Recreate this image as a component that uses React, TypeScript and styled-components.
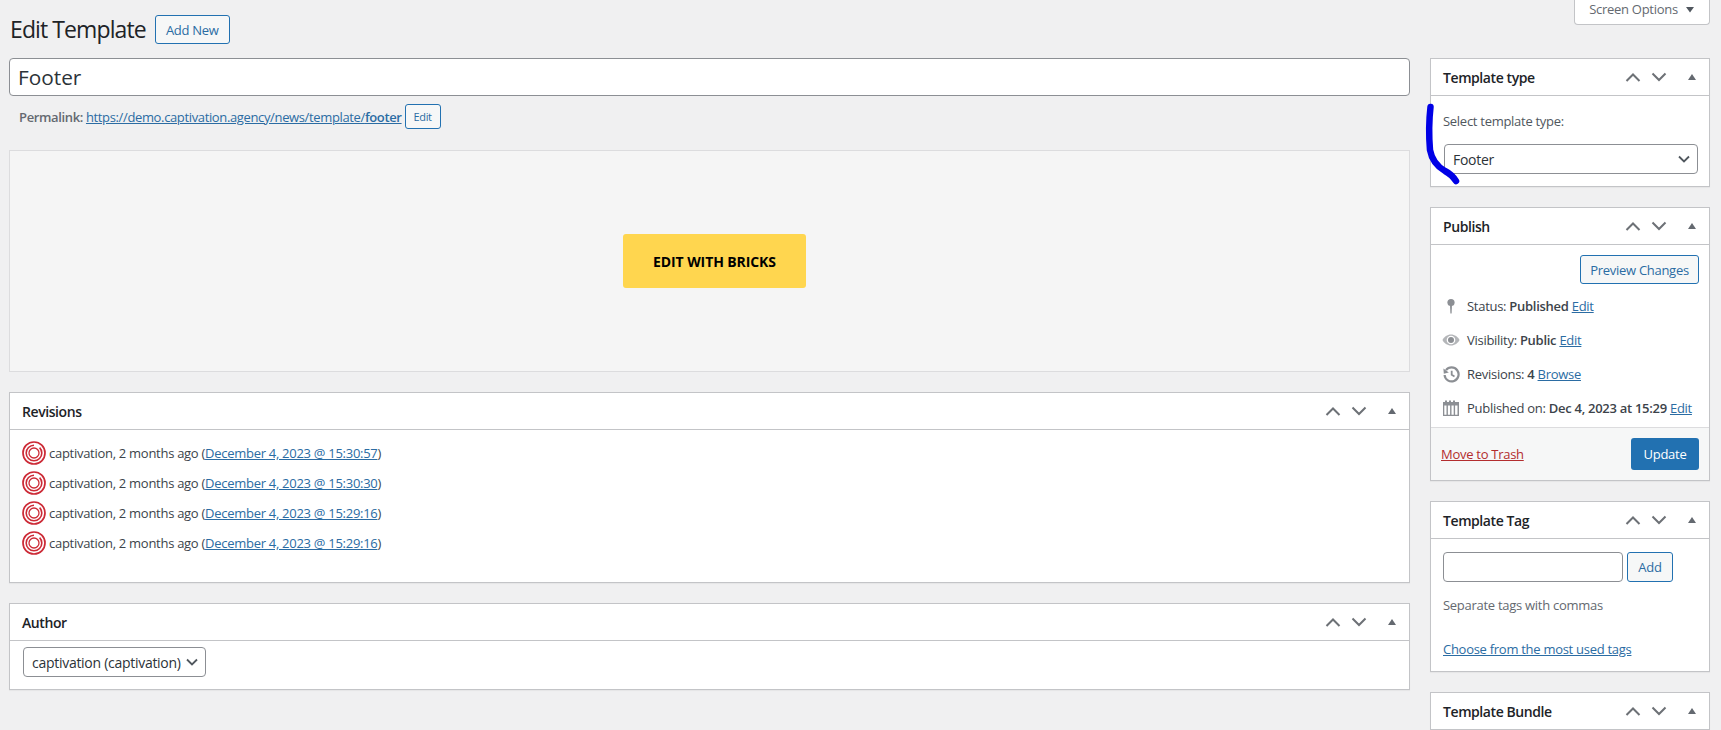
import React from "react";
import styled, { createGlobalStyle } from "styled-components";

const Global = createGlobalStyle`
  html, body { margin: 0; padding: 0; height: 730px; overflow: hidden; background: #f0f0f1; }
  body { font-family: "Open Sans", "Noto Sans", "Liberation Sans", sans-serif; font-size: 13px; color: #3c434a; letter-spacing: -0.28px; }
  * { box-sizing: border-box; }
`;
const Page = styled.div`position: relative; height: 730px; overflow: hidden; padding: 0 11px 0 9px;`;
const Header = styled.header`display: flex; align-items: center; height: 29px; margin: 15px 0 14px;`;
const Title = styled.h1`margin: 0 9px 0 1px; font-size: 23px; font-weight: 400; color: #1d2327; line-height: 29px; letter-spacing: -0.9px;`;
const OutlineButton = styled.button<{ $h?: number; $w?: number; $fs?: number }>`
  height: ${(p) => p.$h ?? 29}px; width: ${(p) => (p.$w ? p.$w + "px" : "auto")};
  padding: 0; border: 1px solid #2271b1; border-radius: 3px; background: #f6f7f7; color: #2b6ca3;
  font: inherit; font-size: ${(p) => p.$fs ?? 13}px; letter-spacing: inherit; flex: none;
`;
const ScreenOptions = styled.button`
  margin: -15px 0 0 auto; align-self: flex-start; width: 136px; height: 25px; padding: 0 0 6px; display: flex; align-items: center; justify-content: center; gap: 7px;
  border: 1px solid #c3c4c7; border-top: 0; border-radius: 0 0 4px 4px; background: #fff; color: #646970; font: inherit; letter-spacing: inherit;
`;
const Columns = styled.div`display: grid; grid-template-columns: 1401px 280px; column-gap: 20px; align-items: start;`;
const Main = styled.main`display: flex; flex-direction: column;`;
const Side = styled.aside`display: flex; flex-direction: column; gap: 20px;`;
const TitleInput = styled.input`
  width: 100%; height: 38px; padding: 0 8px; border: 1px solid #8c8f94; border-radius: 4px; background: #fff;
  font: inherit; font-size: 20.8px; color: #2c3338; outline: none; letter-spacing: 0;
`;
const PermalinkRow = styled.div`display: flex; align-items: center; gap: 3px; height: 25px; margin: 8px 0 21px; padding-left: 10px; color: #646970; font-size: 13px; letter-spacing: -0.36px;`;
const Link = styled.a<{ $danger?: boolean }>`color: ${(p) => (p.$danger ? "#b32d2e" : "#2b6ca3")}; text-decoration: underline;`;
const EditorBox = styled.section`display: flex; align-items: center; justify-content: center; height: 222px; margin-bottom: 20px; background: #f5f5f5; border: 1px solid #dcdcde; padding-left: 10px;`;
const BricksButton = styled.button`
  width: 183px; height: 54px; border: 0; border-radius: 3px; background: #ffd64f; color: #000;
  font: inherit; font-size: 14px; font-weight: 700; text-transform: uppercase; letter-spacing: -0.1px;
`;
const Panel = styled.section<{ $mb?: number }>`background: #fff; border: 1px solid #c3c4c7; margin-bottom: ${(p) => p.$mb ?? 0}px; box-shadow: 0 1px 1px rgba(0,0,0,.04);`;
const PanelHeader = styled.div`display: flex; align-items: center; height: 37px; padding: 0 12px; border-bottom: 1px solid #c3c4c7;`;
const PanelTitle = styled.h2`margin: 0; font-size: 14px; font-weight: 600; color: #1d2327; flex: 1; letter-spacing: -0.42px;`;
const Handles = styled.div`display: flex; align-items: center; gap: 10px;`;
const RevisionList = styled.ul`list-style: none; margin: 0; padding: 8px 12px 24px;`;
const RevisionRow = styled.li`display: flex; align-items: center; gap: 3px; height: 30px; white-space: pre;`;
const AuthorBody = styled.div`padding: 6px 13px 12px;`;
const Select = styled.div<{ $w?: number }>`
  display: flex; align-items: center; justify-content: space-between; height: 30px; width: ${(p) => (p.$w ? p.$w + "px" : "auto")};
  padding: 0 5px 0 8px; border: 1px solid #8c8f94; border-radius: 4px; background: #fff; color: #2c3338; font-size: 14px;
`;
const TypeBody = styled.div`padding: 16px 11px 12px 13px;`;
const FieldLabel = styled.div`line-height: 18px; margin: 0 0 14px -1px; color: #50575e;`;
const PublishActions = styled.div`display: flex; justify-content: flex-end; padding: 10px 10px 5px;`;
const MetaRow = styled.div`display: flex; align-items: center; height: 34px; padding-left: 10px;`;
const MetaIcon = styled.span`display: flex; justify-content: center; width: 20px; margin-right: 6px; color: #8c8f94;`;
const MetaText = styled.span`white-space: pre;`;
const PublishFooter = styled.div`display: flex; align-items: center; justify-content: space-between; height: 53px; margin-top: 2px; padding: 0 10px; background: #f6f7f7; border-top: 1px solid #dcdcde;`;
const PrimaryButton = styled.button`width: 68px; height: 32px; border: 0; border-radius: 3px; background: #2271b1; color: #fff; font: inherit; font-size: 13px; letter-spacing: inherit;`;
const TagBody = styled.div`padding: 13px 12px 13px;`;
const TagRow = styled.div`display: flex; gap: 4px;`;
const TagInput = styled.input`width: 180px; height: 30px; border: 1px solid #8c8f94; border-radius: 4px; background: #fff; outline: none;`;
const Hint = styled.p`margin: 14px 0 26px; line-height: 18px; color: #646970;`;
const Annotation = styled.svg`position: absolute; left: 1420px; top: 100px; pointer-events: none;`;

const Up = () => <svg width="16" height="10" viewBox="0 0 16 10"><path d="M1.500 9 8 2.500 14.500 9" fill="none" stroke="#6d7176" strokeWidth="2"/></svg>;
const Down = () => <svg width="16" height="10" viewBox="0 0 16 10"><path d="M1.500 1.500 8 8l6.500-6.500" fill="none" stroke="#6d7176" strokeWidth="2"/></svg>;
const Tri = () => <svg width="10" height="8" viewBox="0 0 10 8" style={{ marginLeft: 10 }}><path d="M5 1l4 6H1z" fill="#646970"/></svg>;
const Chevron = () => <svg width="16" height="10" viewBox="0 0 16 10"><path d="M3 2.500l5 5 5-5" fill="none" stroke="#50575e" strokeWidth="1.800"/></svg>;
const Caret = () => <svg width="10" height="7" viewBox="0 0 10 7"><path d="M1 1h8L5 6.500z" fill="#50575e"/></svg>;

const Avatar = () => (
  <svg width="24" height="24" viewBox="0 0 24 24" fill="none" stroke="#cc2a36">
    <circle cx="12" cy="12" r="11" strokeWidth="1.700"/>
    <path d="M12 4.200a7.800 7.800 0 1 0 7.800 7.800 7.800 7.800 0 0 0-2.200-5.400" strokeWidth="1.600"/>
    <path d="M12 7a5 5 0 1 0 5 5 5 5 0 0 0-5-5" strokeWidth="1.300"/>
  </svg>
);
const PinIcon = () => <svg width="16" height="16" viewBox="0 0 16 16"><circle cx="8" cy="4.500" r="3.600" fill="currentColor"/><path d="M7 7h2l-.4 8.500h-1.200z" fill="currentColor"/></svg>;
const EyeIcon = () => <svg width="18" height="14" viewBox="0 0 18 14"><path d="M9 1.500c3.800 0 7 2.400 8.500 5.500-1.500 3.100-4.700 5.500-8.500 5.500S2 10.100.5 7C2 3.900 5.200 1.500 9 1.500z" fill="#b4b6b9"/><circle cx="9" cy="7" r="4.300" fill="#fff"/><circle cx="9" cy="7" r="3" fill="currentColor"/></svg>;
const HistoryIcon = () => <svg width="17" height="17" viewBox="0 0 17 17" fill="none" stroke="currentColor"><path d="M3 4.200A7 7 0 1 1 1.600 9" strokeWidth="2.200"/><path d="M.4 2.400l.4 5.400 5-1.400z" fill="currentColor" stroke="none"/><path d="M8.700 4.800v4l2.800 1.700" strokeWidth="1.800"/></svg>;
const CalendarIcon = () => <svg width="16" height="16" viewBox="0 0 16 16"><path fillRule="evenodd" d="M0 2h2V.5h2V2h2V.5h2V2h2V.5h2V2h4v14H0zM1.300 5.500v9.200h2.200V5.500zm3.600 0v9.200h2.200V5.500zm3.600 0v9.200h2.200V5.500zm3.600 0v9.200h2.400V5.500z" fill="currentColor"/></svg>;

const PanelHead = ({ title }: { title: string }) => (
  <PanelHeader>
    <PanelTitle>{title}</PanelTitle>
    <Handles><Up /><Down /><Tri /></Handles>
  </PanelHeader>
);

const revisions = ["December 4, 2023 @ 15:30:57", "December 4, 2023 @ 15:30:30", "December 4, 2023 @ 15:29:16", "December 4, 2023 @ 15:29:16"];
const Strong = styled.b`font-weight: 600;`;

export default function App() {
  return (
    <Page>
      <Global />
      <Header>
        <Title>Edit Template</Title>
        <OutlineButton $w={75}>Add New</OutlineButton>
        <ScreenOptions>Screen Options <Caret /></ScreenOptions>
      </Header>
      <Columns>
        <Main>
          <TitleInput readOnly defaultValue="Footer" />
          <PermalinkRow>
            <Strong>Permalink:</Strong>
            <Link>https://demo.captivation.agency/news/template/<Strong>footer</Strong></Link>
            <OutlineButton $h={25} $w={36} $fs={11}>Edit</OutlineButton>
          </PermalinkRow>
          <EditorBox><BricksButton>Edit with Bricks</BricksButton></EditorBox>
          <Panel $mb={20}>
            <PanelHead title="Revisions" />
            <RevisionList>
              {revisions.map((r, i) => (
                <RevisionRow key={i}><Avatar /><span>captivation, 2 months ago (<Link>{r}</Link>)</span></RevisionRow>
              ))}
            </RevisionList>
          </Panel>
          <Panel>
            <PanelHead title="Author" />
            <AuthorBody><Select $w={183}>captivation (captivation)<Chevron /></Select></AuthorBody>
          </Panel>
        </Main>
        <Side>
          <Panel>
            <PanelHead title="Template type" />
            <TypeBody>
              <FieldLabel>Select template type:</FieldLabel>
              <Select>Footer<Chevron /></Select>
            </TypeBody>
          </Panel>
          <Panel>
            <PanelHead title="Publish" />
            <PublishActions><OutlineButton $w={119}>Preview Changes</OutlineButton></PublishActions>
            <MetaRow><MetaIcon><PinIcon /></MetaIcon><MetaText>Status: <Strong>Published</Strong> <Link>Edit</Link></MetaText></MetaRow>
            <MetaRow><MetaIcon><EyeIcon /></MetaIcon><MetaText>Visibility: <Strong>Public</Strong> <Link>Edit</Link></MetaText></MetaRow>
            <MetaRow><MetaIcon><HistoryIcon /></MetaIcon><MetaText>Revisions: <Strong>4</Strong> <Link>Browse</Link></MetaText></MetaRow>
            <MetaRow><MetaIcon><CalendarIcon /></MetaIcon><MetaText>Published on: <Strong>Dec 4, 2023 at 15:29</Strong> <Link>Edit</Link></MetaText></MetaRow>
            <PublishFooter><Link $danger>Move to Trash</Link><PrimaryButton>Update</PrimaryButton></PublishFooter>
          </Panel>
          <Panel>
            <PanelHead title="Template Tag" />
            <TagBody>
              <TagRow><TagInput /><OutlineButton $w={46} $h={30}>Add</OutlineButton></TagRow>
              <Hint>Separate tags with commas</Hint>
              <Link>Choose from the most used tags</Link>
            </TagBody>
          </Panel>
          <Panel><PanelHead title="Template Bundle" /></Panel>
        </Side>
      </Columns>
      <Annotation width="50" height="90" viewBox="0 0 50 90">
        <path d="M10.500 7C9 20 9 38 10 50c2 11 8 17 15 21 4 2 7 4 11 10" fill="none" stroke="#0000e6" strokeWidth="6.500" strokeLinecap="round"/>
      </Annotation>
    </Page>
  );
}
